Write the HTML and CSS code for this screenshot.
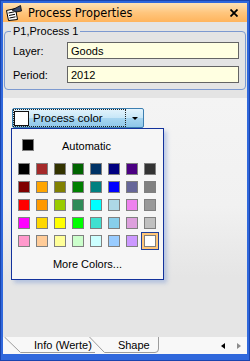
FILE: index.html
```html
<!DOCTYPE html>
<html>
<head>
    <meta charset="UTF-8">
    <title>Process Properties</title>
    <link rel="stylesheet" href="styles.css">
</head>
<body>
    <div class="window">
        <div class="titlebar">
            <svg class="title-icon" width="17" height="16" viewBox="0 0 17 16">
                <polygon points="1.5,5.5 10.5,3.5 12.5,14.5 3.5,15.5" fill="#fff" stroke="#000"/>
                <line x1="3.5" y1="8" x2="9.5" y2="6.8" stroke="#000"/>
                <line x1="4" y1="10.5" x2="10" y2="9.3" stroke="#000"/>
                <line x1="4.5" y1="13" x2="10.5" y2="11.8" stroke="#000"/>
                <polygon points="7,5 15.5,0.5 16.5,6 11,7" fill="#3a4a6a" stroke="#000" stroke-width="0.8"/>
            </svg>
            <span class="title-text">Process Properties</span>
            <svg class="close-icon" width="8" height="8" viewBox="0 0 8 8">
                <path d="M0.5,0.5 L7.5,7.5 M7.5,0.5 L0.5,7.5" stroke="#000" stroke-width="1.8"/>
            </svg>
        </div>

        <div class="top-panel">
            <fieldset class="group">
                <legend>P1,Process 1</legend>
                <div class="field-row">
                    <label class="field-label">Layer:</label>
                    <input class="field" value="Goods">
                </div>
                <div class="field-row">
                    <label class="field-label">Period:</label>
                    <input class="field" value="2012">
                </div>
            </fieldset>
        </div>

        <div class="lower-panel">
            <div class="color-button">
                <div class="color-main">
                    <span class="btn-swatch"></span>
                    <span class="btn-text">Process color</span>
                </div>
                <div class="color-arrow"></div>
            </div>

            <div class="color-popup">
                <div class="auto-row">
                    <span class="swatch" style="background:#000000"></span>
                    <span class="auto-label">Automatic</span>
                </div>
                <div class="swatch-grid">
                    <span class="swatch" style="background:#000000"></span>
                    <span class="swatch" style="background:#a52a2a"></span>
                    <span class="swatch" style="background:#333300"></span>
                    <span class="swatch" style="background:#006400"></span>
                    <span class="swatch" style="background:#003366"></span>
                    <span class="swatch" style="background:#000080"></span>
                    <span class="swatch" style="background:#4b0082"></span>
                    <span class="swatch" style="background:#333333"></span>

                    <span class="swatch" style="background:#800000"></span>
                    <span class="swatch" style="background:#ffa500"></span>
                    <span class="swatch" style="background:#808000"></span>
                    <span class="swatch" style="background:#008000"></span>
                    <span class="swatch" style="background:#008080"></span>
                    <span class="swatch" style="background:#0000ff"></span>
                    <span class="swatch" style="background:#666699"></span>
                    <span class="swatch" style="background:#808080"></span>

                    <span class="swatch" style="background:#ff0000"></span>
                    <span class="swatch" style="background:#ff9900"></span>
                    <span class="swatch" style="background:#99cc00"></span>
                    <span class="swatch" style="background:#2e8b57"></span>
                    <span class="swatch" style="background:#00ffff"></span>
                    <span class="swatch" style="background:#add8e6"></span>
                    <span class="swatch" style="background:#ee82ee"></span>
                    <span class="swatch" style="background:#999999"></span>

                    <span class="swatch" style="background:#ff00ff"></span>
                    <span class="swatch" style="background:#ffd700"></span>
                    <span class="swatch" style="background:#ffff00"></span>
                    <span class="swatch" style="background:#00ff00"></span>
                    <span class="swatch" style="background:#40e0d0"></span>
                    <span class="swatch" style="background:#87ceeb"></span>
                    <span class="swatch" style="background:#dda0dd"></span>
                    <span class="swatch" style="background:#c0c0c0"></span>

                    <span class="swatch" style="background:#ff99cc"></span>
                    <span class="swatch" style="background:#ffcc99"></span>
                    <span class="swatch" style="background:#ffff99"></span>
                    <span class="swatch" style="background:#ccffcc"></span>
                    <span class="swatch" style="background:#ccffff"></span>
                    <span class="swatch" style="background:#99ccff"></span>
                    <span class="swatch" style="background:#cc99ff"></span>
                    <span class="swatch selected" style="background:#ffffff"></span>
                </div>
                <div class="more-colors">More Colors...</div>
            </div>
        </div>

        <div class="tab-strip">
            <svg class="tab-lines" width="160" height="17" viewBox="0 0 160 17">
                <path d="M1.5,0 L17.5,15.5 L92,15.5" fill="none" stroke="#9c9c9c"/>
                <path d="M86.5,0 L101.5,15.5 L152,15.5 Q155.5,15.5 155.5,12 L155.5,0" fill="none" stroke="#9c9c9c"/>
            </svg>
            <span class="tab-label tab-info">Info (Werte)</span>
            <span class="tab-label tab-shape">Shape</span>
            <div class="tab-scroll">
                <span class="arrow-left"></span>
                <span class="arrow-right"></span>
            </div>
        </div>
    </div>
</body>
</html>
```

FILE: styles.css
```css
body {
    margin: 0;
    padding: 0;
    width: 250px;
    height: 361px;
    overflow: hidden;
    font-family: "Liberation Sans", Arial, sans-serif;
    font-size: 11px;
    color: #000;
}
.window {
    box-sizing: border-box;
    height: 361px;
    display: flex;
    flex-direction: column;
    border: 3px solid #3068dc;
    border-bottom-width: 7px;
    outline: 1px solid #1a44ae;
    outline-offset: -1px;
    background-color: #e4e4e4;
}
.titlebar {
    height: 19px;
    display: flex;
    align-items: center;
    padding: 0 9px 0 2px;
    background: linear-gradient(#ffe2b4, #ffc67e 50%, #ffb45c);
}
.title-icon {
    display: block;
}
.title-text {
    flex: 1;
    margin-left: 6px;
    padding-top: 1px;
    font-family: "DejaVu Sans", Verdana, sans-serif;
    font-size: 11.4px;
}
.close-icon {
    display: block;
}
.top-panel {
    padding: 3px 1px 8px 1px;
}
.group {
    margin: 0;
    min-width: 0;
    border: 1px solid #7d9ad0;
    border-radius: 4px;
    padding: 4px 6px 6px 8px;
}
.group legend {
    padding: 0 2px;
    margin-left: -2px;
    line-height: 13px;
    font-size: 11px;
}
.field-row {
    display: flex;
    align-items: center;
    height: 17px;
}
.field-row + .field-row {
    margin-top: 7px;
}
.field-label {
    width: 54px;
}
.field {
    box-sizing: border-box;
    width: 172px;
    height: 17px;
    margin: 0;
    padding: 0 0 0 3px;
    border: 1px solid #646464;
    background-color: #ffffe1;
    font-family: "Liberation Sans", Arial, sans-serif;
    font-size: 11px;
    color: #000;
    outline: none;
}
.lower-panel {
    flex: 1;
    padding: 10px 0 0 9px;
    background: linear-gradient(#f4f4f4 0%, #f1f1f1 45%, #e5e5e5 75%);
}
.color-button {
    box-sizing: border-box;
    display: flex;
    width: 132px;
    height: 20px;
    border: 1px solid #3c7fb1;
    border-radius: 2px;
    background: linear-gradient(#e3f3fc 0%, #c8e7f8 48%, #a7d5f0 52%, #8fc7e9 100%);
}
.color-main {
    box-sizing: border-box;
    width: 113px;
    height: 18px;
    display: flex;
    align-items: center;
    border: 1px dotted #222;
}
.btn-swatch {
    box-sizing: border-box;
    width: 15px;
    height: 15px;
    background-color: #fff;
    border: 1px solid #111;
}
.btn-text {
    margin-left: 4px;
    font-size: 11.5px;
}
.color-arrow {
    flex: 1;
    display: flex;
    align-items: center;
    justify-content: center;
}
.color-arrow::before {
    content: "";
    border-left: 3px solid transparent;
    border-right: 3px solid transparent;
    border-top: 3px solid #000;
}
.color-popup {
    box-sizing: border-box;
    width: 153px;
    height: 152px;
    margin-left: -1px;
    padding-top: 10px;
    border: 1px solid #13329c;
    background-color: #f6f6f6;
    box-shadow: 3px 3px 4px rgba(90, 130, 210, 0.35);
}
.auto-row {
    display: flex;
    align-items: center;
    height: 12px;
    padding-left: 10px;
}
.auto-label {
    margin-left: 28px;
    margin-top: 2px;
    line-height: 12px;
}
.swatch {
    box-sizing: border-box;
    display: block;
    width: 12px;
    height: 12px;
    border: 1px solid #808080;
}
.swatch.selected {
    box-shadow: 0 0 0 2px #ffc678, 0 0 0 3px #1f3f9a;
}
.swatch-grid {
    display: grid;
    grid-template-columns: repeat(8, 12px);
    gap: 6px;
    margin-top: 12px;
    padding-left: 6px;
}
.more-colors {
    margin-top: 11px;
    line-height: 13px;
    text-align: center;
}
.tab-strip {
    position: relative;
    height: 17px;
    display: flex;
    align-items: center;
    line-height: 17px;
    background-color: #f8f8f8;
}
.tab-lines {
    position: absolute;
    left: 0;
    top: 0;
}
.tab-label {
    position: relative;
}
.tab-info {
    margin-left: 31px;
}
.tab-shape {
    margin-left: 26px;
}
.tab-scroll {
    margin-left: auto;
    display: flex;
    align-items: center;
    gap: 12px;
    padding-right: 6px;
}
.arrow-left {
    border-top: 3.5px solid transparent;
    border-bottom: 3.5px solid transparent;
    border-right: 4px solid #000;
}
.arrow-right {
    border-top: 3.5px solid transparent;
    border-bottom: 3.5px solid transparent;
    border-left: 4px solid #8c8c8c;
}
```
